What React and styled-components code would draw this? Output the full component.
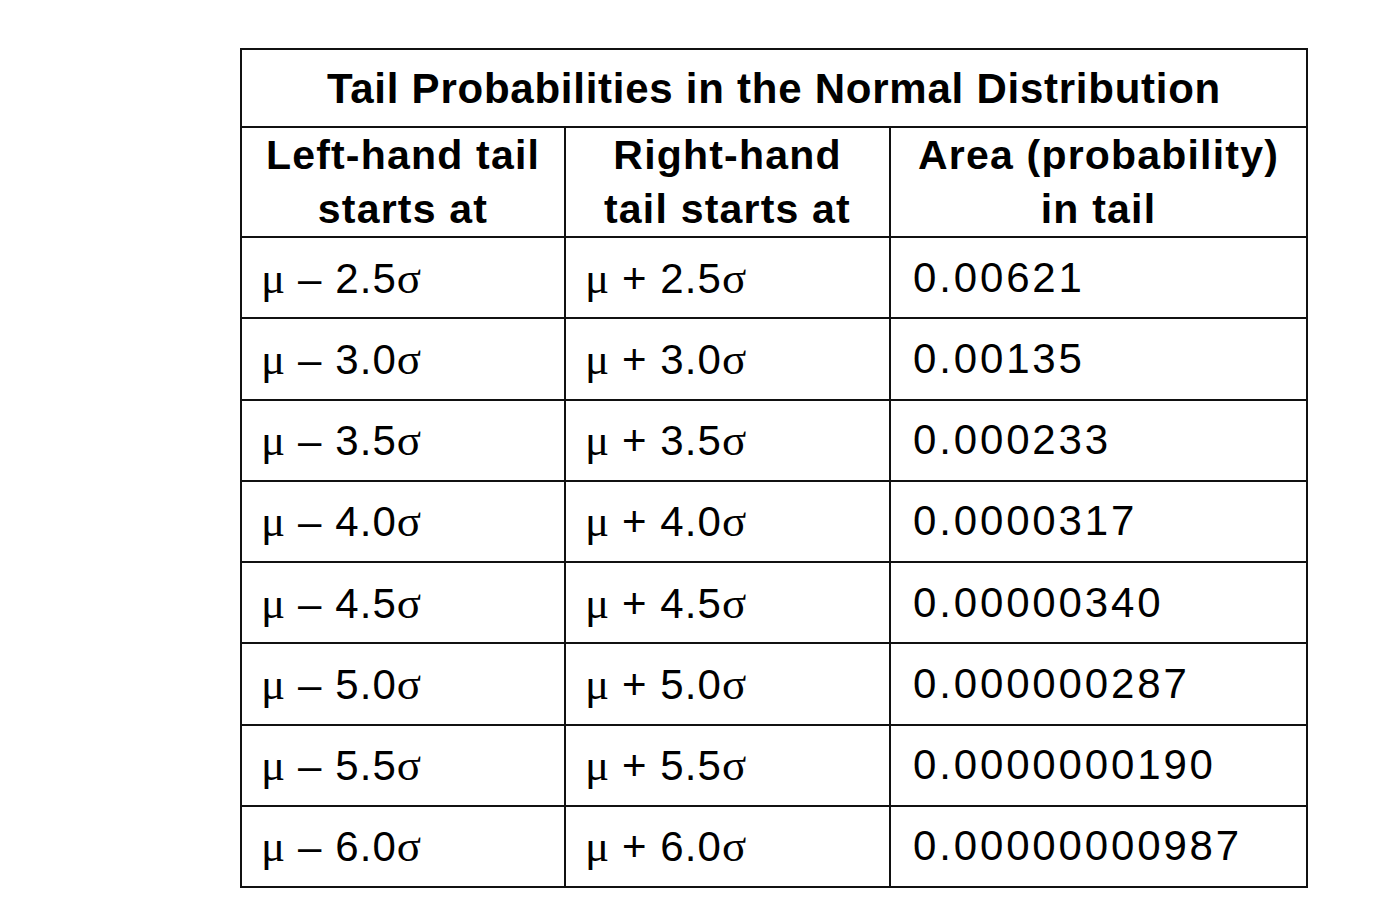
import React from "react";
import styled, { createGlobalStyle } from "styled-components";

const rows = [
  ["2.5", "0.00621"],
  ["3.0", "0.00135"],
  ["3.5", "0.000233"],
  ["4.0", "0.0000317"],
  ["4.5", "0.00000340"],
  ["5.0", "0.000000287"],
  ["5.5", "0.0000000190"],
  ["6.0", "0.00000000987"],
];

const GlobalStyle = createGlobalStyle`
  html, body {
    margin: 0;
    padding: 0;
    background: #ffffff;
  }
  body {
    font-family: "Liberation Sans", Arial, sans-serif;
    color: #000000;
  }
`;

const Page = styled.div`
  width: 1400px;
  height: 900px;
  padding: 48px 0 0 240px;
  box-sizing: border-box;
`;

const Table = styled.table`
  border-collapse: collapse;
  table-layout: fixed;
  width: 1066px;
`;

const TitleCell = styled.th`
  height: 74px;
  border: 2px solid #111;
  font-size: 42px;
  font-weight: 700;
  letter-spacing: 0.75px;
  text-align: center;
  vertical-align: middle;
  padding: 2px 0 0;
`;

const HeadCell = styled.th`
  height: 105px;
  border: 2px solid #111;
  font-size: 41px;
  font-weight: 700;
  letter-spacing: 1.2px;
  line-height: 54px;
  text-align: center;
  vertical-align: middle;
  padding: 0 2px;
  white-space: nowrap;
`;

const Cell = styled.td`
  height: 79.25px;
  border: 2px solid #111;
  font-size: 42px;
  letter-spacing: ${(p) => (p.$num ? "2.85px" : "1.1px")};
  padding: 0 0 0 ${(p) => (p.$num ? "22px" : "19px")};
  vertical-align: middle;
  white-space: nowrap;
`;

const Greek = styled.span`
  font-family: "Liberation Serif", "Times New Roman", serif;
  font-size: 45px;
  letter-spacing: 0;
`;

const Expr = ({ sign, k }) => (
  <>
    <Greek>μ</Greek> {sign} {k}
    <Greek>σ</Greek>
  </>
);

export default function App() {
  return (
    <Page>
      <GlobalStyle />
      <Table>
        <colgroup>
          <col style={{ width: 324 }} />
          <col style={{ width: 325 }} />
          <col style={{ width: 417 }} />
        </colgroup>
        <thead>
          <tr>
            <TitleCell colSpan={3}>
              Tail Probabilities in the Normal Distribution
            </TitleCell>
          </tr>
          <tr>
            <HeadCell>
              Left-hand tail
              <br />
              starts at
            </HeadCell>
            <HeadCell>
              Right-hand
              <br />
              tail starts at
            </HeadCell>
            <HeadCell>
              Area (probability)
              <br />
              in tail
            </HeadCell>
          </tr>
        </thead>
        <tbody>
          {rows.map(([k, area]) => (
            <tr key={k}>
              <Cell>
                <Expr sign="–" k={k} />
              </Cell>
              <Cell>
                <Expr sign="+" k={k} />
              </Cell>
              <Cell $num>{area}</Cell>
            </tr>
          ))}
        </tbody>
      </Table>
    </Page>
  );
}
